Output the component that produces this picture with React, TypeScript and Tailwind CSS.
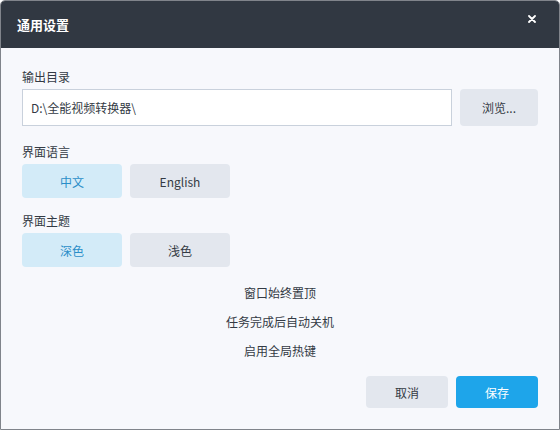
import React, { useState } from 'react';

const font = { fontFamily: '"Noto Sans CJK SC", "Noto Sans", sans-serif' };

export default function App() {
    const [lang, setLang] = useState<'zh' | 'en'>('zh');
    const [theme, setTheme] = useState<'dark' | 'light'>('dark');

    const choice = (active: boolean) =>
        active
            ? 'w-[100px] h-[34px] rounded-[4px] bg-[#d3ebf8] text-[#2b8ec8] text-[12px]'
            : 'w-[100px] h-[34px] rounded-[4px] bg-[#e3e7ee] text-[#333a44] text-[12px]';

    return (
        <div className="w-[560px] h-[430px] bg-white" style={font}>
            <div className="w-full h-full flex flex-col border border-[#80848b] rounded-t-[5px] overflow-hidden bg-[#f7f8fc]">
                {/* Header */}
                <div className="h-[47px] shrink-0 bg-[#313842] flex items-center justify-between pl-[16px] pr-[23px]">
                    <span className="text-white text-[13px] font-bold mt-[1px]">通用设置</span>
                    <svg width="8" height="8" viewBox="0 0 8 8" className="-mt-[12px]">
                        <path d="M1 1 L7 7 M7 1 L1 7" stroke="white" strokeWidth="1.8" strokeLinecap="round" />
                    </svg>
                </div>

                {/* Body */}
                <div className="flex-1 flex flex-col px-[21px] pt-[20px] text-[12px] text-[#333a44] leading-[17px]">
                    <div>输出目录</div>
                    <div className="flex gap-[8px] mt-[4px]">
                        <div className="w-[430px] h-[37px] bg-white border border-[#c9d1dc] flex items-center pl-[8px]">
                            D:\全能视频转换器\
                        </div>
                        <button className="w-[78px] h-[37px] rounded-[4px] bg-[#e3e7ee]">浏览...</button>
                    </div>

                    <div className="mt-[17px]">界面语言</div>
                    <div className="flex gap-[8px] mt-[4px]">
                        <button className={choice(lang === 'zh')} onClick={() => setLang('zh')}>中文</button>
                        <button className={choice(lang === 'en')} onClick={() => setLang('en')}>English</button>
                    </div>

                    <div className="mt-[14px]">界面主题</div>
                    <div className="flex gap-[8px] mt-[4px]">
                        <button className={choice(theme === 'dark')} onClick={() => setTheme('dark')}>深色</button>
                        <button className={choice(theme === 'light')} onClick={() => setTheme('light')}>浅色</button>
                    </div>

                    <div className="flex flex-col items-center gap-[12px] mt-[17px]">
                        <span>窗口始终置顶</span>
                        <span>任务完成后自动关机</span>
                        <span>启用全局热键</span>
                    </div>

                    <div className="flex justify-end gap-[8px] mt-[17px]">
                        <button className="w-[82px] h-[32px] rounded-[4px] bg-[#e3e7ee]">取消</button>
                        <button className="w-[82px] h-[32px] rounded-[4px] bg-[#1ea5ea] text-white">保存</button>
                    </div>
                </div>
            </div>
        </div>
    );
}
